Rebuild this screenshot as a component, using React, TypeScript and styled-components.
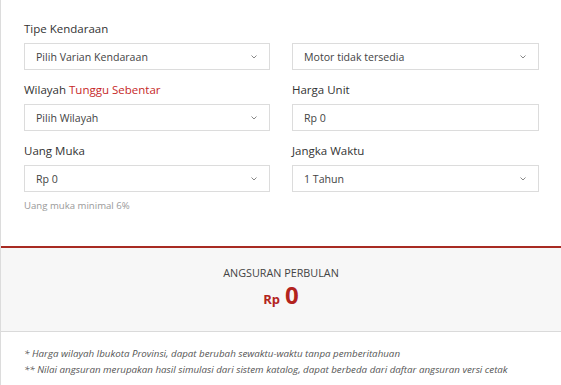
import React from "react";
import styled, { createGlobalStyle } from "styled-components";

const GlobalStyle = createGlobalStyle`
  html, body {
    margin: 0;
    padding: 0;
    background: #fff;
  }
  body {
    font-family: "Open Sans", "Liberation Sans", sans-serif;
    color: #333;
  }
`;

const Chevron: React.FC = () => (
  <ChevronIcon viewBox="0 0 6 4" width="6" height="4">
    <path d="M0.5 0.5l2.5 2.5 2.5-2.5" fill="none" stroke="#888" strokeWidth="1" />
  </ChevronIcon>
);

interface FieldProps {
  label?: React.ReactNode;
  value: string;
  select?: boolean;
  hint?: string;
}

const Field: React.FC<FieldProps> = ({ label, value, select = true, hint }) => (
  <FieldBox>
    <Label>{label ?? "\u00a0"}</Label>
    <Input>
      <span>{value}</span>
      {select && <Chevron />}
    </Input>
    {hint && <Hint>{hint}</Hint>}
  </FieldBox>
);

const App: React.FC = () => {
  return (
    <Page>
      <GlobalStyle />
      <Form>
        <Field label="Tipe Kendaraan" value="Pilih Varian Kendaraan" />
        <Field value="Motor tidak tersedia" />
        <Field
          label={
            <>
              Wilayah <Loading>Tunggu Sebentar</Loading>
            </>
          }
          value="Pilih Wilayah"
        />
        <Field label="Harga Unit" value="Rp 0" select={false} />
        <Field label="Uang Muka" value="Rp 0" hint="Uang muka minimal 6%" />
        <Field label="Jangka Waktu" value="1 Tahun" />
      </Form>
      <Result>
        <ResultTitle>ANGSURAN PERBULAN</ResultTitle>
        <Amount>
          <Currency>Rp</Currency>
          <Total>0</Total>
        </Amount>
      </Result>
      <Notes>
        <Note>* Harga wilayah Ibukota Provinsi, dapat berubah sewaktu-waktu tanpa pemberitahuan</Note>
        <Note>** Nilai angsuran merupakan hasil simulasi dari sistem katalog, dapat berbeda dari daftar angsuran versi cetak</Note>
      </Notes>
    </Page>
  );
};

const Page = styled.div`
  width: 561px;
  height: 385px;
  box-sizing: border-box;
  border-left: 1px solid #dcdcdc;
  overflow: hidden;
`;

const Form = styled.div`
  display: grid;
  grid-template-columns: 246px 247px;
  grid-auto-rows: 49px;
  column-gap: 22px;
  row-gap: 12px;
  align-content: start;
  padding: 21px 22px 0 23px;
  height: 248px;
  box-sizing: border-box;
  border-bottom: 2px solid #a82a22;
`;

const FieldBox = styled.div`
  display: flex;
  flex-direction: column;
`;

const Label = styled.div`
  font-size: 11.5px;
  line-height: 16px;
  color: #333;
  margin-bottom: 6px;
`;

const Loading = styled.span`
  color: #c62828;
`;

const Input = styled.div`
  height: 27px;
  flex-shrink: 0;
  box-sizing: border-box;
  border: 1px solid #dcdcdc;
  display: flex;
  align-items: center;
  justify-content: space-between;
  padding: 0 12px 0 11px;
  font-size: 10.6px;
  color: #444;
`;

const ChevronIcon = styled.svg`
  display: block;
`;

const Hint = styled.div`
  font-size: 9.6px;
  color: #999;
  margin-top: 8px;
  line-height: 12px;
`;

const Result = styled.div`
  background: #f7f7f7;
  height: 84px;
  border-bottom: 1px solid #dadada;
  display: flex;
  flex-direction: column;
  align-items: center;
  padding-top: 17px;
  box-sizing: border-box;
`;

const ResultTitle = styled.div`
  font-size: 10.8px;
  color: #444;
  line-height: 16px;
`;

const Amount = styled.div`
  display: flex;
  align-items: baseline;
  gap: 5px;
  color: #b3241e;
  font-weight: 700;
`;

const Currency = styled.span`
  font-size: 13px;
`;

const Total = styled.span`
  font-size: 24px;
  line-height: 28px;
`;

const Notes = styled.div`
  padding: 14px 0 0 23px;
`;

const Note = styled.div`
  font-size: 9.75px;
  font-style: italic;
  color: #555;
  line-height: 16px;
`;

export default App;
